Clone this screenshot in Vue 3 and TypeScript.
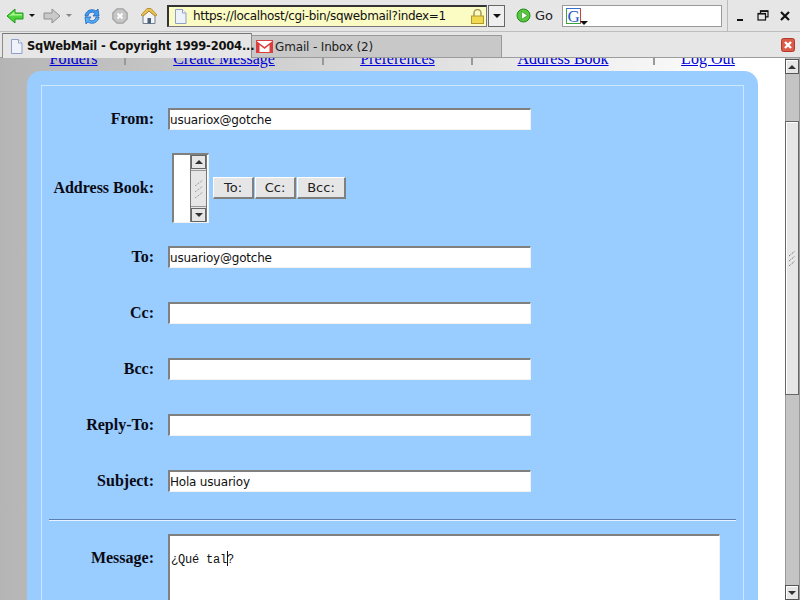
<script setup lang="ts">
const links: string[] = ['Folders', 'Create Message', 'Preferences', 'Address Book', 'Log Out']
const rows = [
  { label: 'To:', value: 'usuarioy@gotche', cls: 'r-to' },
  { label: 'Cc:', value: '', cls: 'r-cc' },
  { label: 'Bcc:', value: '', cls: 'r-bcc' },
  { label: 'Reply-To:', value: '', cls: 'r-reply' },
  { label: 'Subject:', value: 'Hola usuarioy', cls: 'r-subject' },
]
</script>

<template>
  <div class="window">
    <header class="toolbar">
      <svg class="ic back" width="18" height="18" viewBox="0 0 18 18"><path d="M1 9 9 2v4h8v6H9v4z" fill="#4fd33c" stroke="#1f9a18" stroke-width="1" stroke-linejoin="round"/><path d="M3 9 8.500 4.500V7h7.500v1.500H7z" fill="#a9f58f"/></svg>
      <span class="caret dark"></span>
      <svg class="ic fwd" width="18" height="18" viewBox="0 0 18 18"><path d="M17 9 9 2v4H1v6h8v4z" fill="#c9c9c9" stroke="#909090" stroke-width="1" stroke-linejoin="round"/></svg>
      <span class="caret grey"></span>
      <svg class="ic reload" width="18" height="18" viewBox="0 0 18 18"><path d="M2 9a7 7 0 0 1 11-5l2-2 1 7h-6l2-2.500A4 4 0 0 0 5 9z" fill="#3f9bee" stroke="#1c62c4" stroke-width=".8"/><path d="M16 10a7 7 0 0 1-11 5l-2 2-1-7h6l-2 2.500A4 4 0 0 0 13 10z" fill="#55b0f5" stroke="#1c62c4" stroke-width=".8"/></svg>
      <svg class="ic stop" width="16" height="16" viewBox="0 0 16 16"><path d="M5 .8h6L15.200 5v6L11 15.200H5L.8 11V5z" fill="#c6c6c6" stroke="#a2a2a2" stroke-width="1.200"/><path d="M5.500 5.500l5 5m0-5-5 5" stroke="#fff" stroke-width="2"/></svg>
      <svg class="ic home" width="18" height="18" viewBox="0 0 18 18"><path d="M3 9v7.500h12V9L9 4z" fill="#f4f4f4" stroke="#6f7f8f"/><path d="M1 8 7 1.500h4l6 6.500-2 1-6-5-6 5z" fill="#eec14e" stroke="#a98528" stroke-width=".8"/><rect x="7.500" y="11" width="3.500" height="5.500" fill="#47617e"/></svg>
      <div class="url">
        <svg class="page" width="13" height="15" viewBox="0 0 13 15"><path d="M1.500.5h7l3.500 3.500v10.500H1.500z" fill="#eef3fb" stroke="#8f9fc6"/><path d="M8.500.5V4H12" fill="#fff" stroke="#8f9fc6"/></svg>
        <span class="url-text">https://localhost/cgi-bin/sqwebmail?index=1</span>
        <svg class="lock" width="13" height="15" viewBox="0 0 13 15"><path d="M3 7V4a3.500 3.500 0 0 1 7 0v3" fill="none" stroke="#a79a5c" stroke-width="1.500"/><rect x=".5" y="7" width="12" height="7.500" fill="#f0d850" stroke="#b09a30"/></svg>
      </div>
      <div class="url-drop"><span class="caret dark"></span></div>
      <svg class="go-ic" width="15" height="15" viewBox="0 0 15 15"><circle cx="7.500" cy="7.500" r="6.500" fill="#58c83c" stroke="#1f8a18"/><path d="M5.500 3.500v8l6-4z" fill="#fff" stroke="#1f8a18" stroke-width=".6"/></svg>
      <span class="go">Go</span>
      <div class="search">
        <span class="g-logo">G</span><span class="caret dark small"></span>
      </div>
      <div class="winctl">
        <svg width="12" height="12" viewBox="0 0 12 12"><rect x="2" y="9" width="6" height="2" fill="#111"/></svg>
        <svg width="12" height="12" viewBox="0 0 12 12"><path d="M3.500 3V.8h7.500v6H8.500" fill="none" stroke="#111" stroke-width="1.200"/><rect x="1" y="3.500" width="7.500" height="6.500" fill="none" stroke="#111" stroke-width="1.200"/><rect x="3.500" y=".5" width="7.500" height="1.500" fill="#111"/><rect x="1" y="3" width="7.500" height="1.500" fill="#111"/></svg>
        <svg width="12" height="12" viewBox="0 0 12 12"><path d="M2 2l8 8m0-8-8 8" stroke="#111" stroke-width="2.200"/></svg>
      </div>
    </header>

    <nav class="tabs">
      <div class="tab active">
        <svg width="13" height="15" viewBox="0 0 13 15"><path d="M1.500.5h7l3.500 3.500v10.500H1.500z" fill="#eef3fb" stroke="#8f9fc6"/><path d="M8.500.5V4H12" fill="#fff" stroke="#8f9fc6"/></svg>
        <span>SqWebMail - Copyright 1999-2004...</span>
      </div>
      <div class="tab inactive">
        <svg width="17" height="13" viewBox="0 0 17 13"><rect x=".5" y=".5" width="16" height="12" fill="#fff" stroke="#d94040"/><path d="M.5 1v11.500h3V5L8.500 9l5-4v7.500h3V1L8.500 7z" fill="#dd3c3c"/></svg>
        <span>Gmail - Inbox (2)</span>
      </div>
      <div class="close-all">
        <svg width="14" height="14" viewBox="0 0 14 14"><rect x=".5" y=".5" width="13" height="13" rx="2" fill="#dc5a48" stroke="#b23a2c"/><path d="M4 4l6 6m0-6-6 6" stroke="#fff" stroke-width="2.400"/></svg>
      </div>
    </nav>

    <div class="view">
      <main class="page-area">
        <div class="menu">
          <div v-for="l in links" :key="l" class="menu-cell"><a href="#">{{ l }}</a></div>
        </div>
        <section class="panel">
          <div class="inner">
            <div class="row r-from">
              <label>From:</label>
              <input class="field" value="usuariox@gotche" />
            </div>
            <div class="row r-book">
              <label>Address Book:</label>
              <div class="book">
                <div class="listbox">
                  <div class="lb-bar">
                    <span class="sb-btn tiny"><i class="tri up"></i></span>
                    <span class="lb-thumb">
                      <svg width="10" height="20" viewBox="0 0 10 20"><path d="M1 7 9 1M1 13l8-6M1 19l8-6" stroke="#8a8a8a" stroke-dasharray="1 1" fill="none"/></svg>
                    </span>
                    <span class="sb-btn tiny"><i class="tri down"></i></span>
                  </div>
                </div>
                <button class="btn b-to">To:</button>
                <button class="btn b-cc">Cc:</button>
                <button class="btn b-bcc">Bcc:</button>
              </div>
            </div>
            <div v-for="r in rows" :key="r.label" class="row" :class="r.cls">
              <label>{{ r.label }}</label>
              <input class="field" :value="r.value" />
            </div>
            <div class="rule"></div>
            <div class="row r-msg">
              <label>Message:</label>
              <div class="message"><span>¿Qué tal</span><i class="cursor"></i><span>?</span></div>
            </div>
          </div>
        </section>
      </main>
      <aside class="scrollbar">
        <span class="sb-btn"><i class="tri up"></i></span>
        <span class="sb-gap"></span>
        <span class="sb-thumb">
          <svg width="8" height="16" viewBox="0 0 8 16"><path d="M1 6 7 1M1 11l6-5M1 16l6-5" stroke="#666" stroke-dasharray="1 1" fill="none"/></svg>
        </span>
        <span class="sb-track"></span>
        <span class="sb-btn"><i class="tri down"></i></span>
      </aside>
    </div>
  </div>
</template>

<style>
html, body { margin: 0; overflow: hidden; }
</style>

<style scoped>
.window {
  width: 800px;
  height: 600px;
  display: flex;
  flex-direction: column;
  overflow: hidden;
  font-family: "DejaVu Sans", sans-serif;
  font-size: 12px;
  color: #111;
  background: #e6e6e6;
}
.toolbar {
  height: 32px;
  box-sizing: border-box;
  flex: none;
  display: flex;
  align-items: center;
  padding-left: 6px;
  border-bottom: 1px solid #bdbdbd;
  background: #e6e6e6;
}
.toolbar svg { flex: none; }
.caret {
  width: 0;
  height: 0;
  flex: none;
  border-left: 3px solid transparent;
  border-right: 3px solid transparent;
  border-top: 3px solid #111;
}
.caret.grey { border-top-color: #888; }
.ic.back { margin-right: 5px; }
.ic.fwd { margin-left: 8px; margin-right: 5px; }
.ic.reload { margin-left: 11px; }
.ic.stop { margin-left: 11px; }
.ic.home { margin-left: 12px; }
.url {
  margin-left: 9px;
  width: 320px;
  height: 22px;
  box-sizing: border-box;
  display: flex;
  align-items: center;
  border: 1px solid #777;
  border-top: 2px solid #333;
  border-left: 2px solid #333;
  background: #fbfbc4;
  padding-left: 5px;
  padding-right: 2px;
}
.url-text {
  margin-left: 6px;
  flex: 1;
  min-width: 0;
  font-size: 12px;
  letter-spacing: -0.32px;
  white-space: nowrap;
  overflow: hidden;
}
.url-drop {
  width: 17px;
  height: 22px;
  margin-left: 1px;
  box-sizing: border-box;
  border: 1px solid #666;
  background: #efefef;
  display: flex;
  align-items: center;
  justify-content: center;
}
.url-drop .caret { border-left-width: 4px; border-right-width: 4px; border-top-width: 4px; }
.go-ic { margin-left: 11px; }
.go { margin-left: 4px; font-size: 13px; color: #222; }
.search {
  margin-left: 9px;
  width: 160px;
  height: 22px;
  box-sizing: border-box;
  border: 1px solid #999;
  background: #fff;
  padding-left: 3px;
  display: flex;
}
.g-logo {
  width: 15px;
  height: 16px;
  margin-top: 2px;
  box-sizing: border-box;
  border: 1px solid #3aa040;
  border-top-color: #3a6fd0;
  border-right-color: #d04030;
  font: 17px/15px "Liberation Serif", serif;
  color: #2558c8;
  text-align: center;
}
.caret.small { margin-top: 15px; border-left-width: 4px; border-right-width: 4px; border-top-width: 4px; margin-left: -1px; }
.winctl {
  margin-left: 5px;
  height: 32px;
  flex: 1;
  box-sizing: border-box;
  border-left: 1px solid #bbb;
  display: flex;
  align-items: center;
  justify-content: space-between;
  padding: 0 9px 0 7px;
}
.tabs {
  height: 26px;
  flex: none;
  box-sizing: border-box;
  display: flex;
  align-items: flex-end;
  padding-left: 2px;
  border-bottom: 1px solid #9c9c9c;
  background: #e6e6e6;
}
.tab {
  width: 250px;
  flex: none;
  box-sizing: border-box;
  display: flex;
  align-items: center;
  white-space: nowrap;
}
.tab svg { flex: none; }
.tab.active {
  height: 25px;
  margin-bottom: -1px;
  position: relative;
  border: 1px solid #8c8c8c;
  border-bottom: none;
  border-top-color: #777;
  background: #e6e6e6;
  padding-left: 7px;
  gap: 4px;
  font-size: 11.5px;
  letter-spacing: -0.2px;
  font-weight: 700;
}
.tab.inactive {
  height: 22px;
  background: #c8c8c8;
  border: 1px solid #999;
  border-left: none;
  border-bottom: none;
  padding-left: 4px;
  gap: 2px;
  font-size: 12px;
  letter-spacing: -0.15px;
  color: #222;
}
.close-all { margin-left: auto; margin-right: 5px; align-self: center; display: flex; }
.view {
  flex: 1;
  min-height: 0;
  display: flex;
}
.page-area {
  flex: 1;
  min-width: 0;
  background: linear-gradient(90deg, #b5b5b5 0%, #ffffff 95%);
  overflow: hidden;
}
.menu {
  display: grid;
  grid-template-columns: 103px 198px 149px 182px 108px;
  margin: -5px 0 0 21px;
  height: 18px;
  font: 16px/17px "Liberation Serif", serif;
  text-align: center;
}
.menu-cell {
  height: 12px;
  box-sizing: border-box;
  border-left: 2px solid #999;
}
.menu-cell:first-child { border-left: none; padding-left: 2px; }
.menu-cell a { color: #0000d8; position: relative; top: -3px; }
.panel {
  margin: 0 0 0 27px;
  width: 731px;
  height: 560px;
  box-sizing: border-box;
  padding: 14px;
  background: #99ccff;
  border-radius: 14px 14px 0 0;
}
.inner {
  width: 703px;
  height: 600px;
  box-sizing: border-box;
  border: 1px solid #cfe6ff;
  padding-top: 22px;
}
.row {
  display: grid;
  grid-template-columns: 112px 1fr;
  column-gap: 14px;
  align-items: center;
}
.row label {
  text-align: right;
  font: 700 16px/18px "Liberation Serif", serif;
  color: #0a0a14;
  white-space: nowrap;
}
.field {
  width: 363px;
  height: 22px;
  box-sizing: border-box;
  padding: 1px 0 0 0;
  margin: 0;
  border: 2px solid #808080;
  border-right: 1px solid #f2f2f2;
  border-bottom: 1px solid #f2f2f2;
  background: #fff;
  font: 12px "DejaVu Sans", sans-serif;
  letter-spacing: -0.2px;
  color: #111;
  outline: none;
}
.r-book { margin-top: 23px; }
.r-to { margin-top: 23px; }
.r-cc, .r-bcc, .r-reply, .r-subject { margin-top: 34px; }
.book {
  display: flex;
  align-items: center;
  padding-left: 4px;
}
.listbox {
  width: 37px;
  height: 70px;
  box-sizing: border-box;
  border: 2px solid #808080;
  border-right: 1px solid #f2f2f2;
  border-bottom: 1px solid #f2f2f2;
  background: #fff;
  display: flex;
  justify-content: flex-end;
  margin-right: 4px;
}
.lb-bar {
  width: 15px;
  margin-right: 1px;
  display: flex;
  flex-direction: column;
  background: #e6e6e6;
  border-left: 1px solid #777;
  border-right: 1px solid #777;
}
.lb-thumb {
  flex: 1;
  display: flex;
  align-items: center;
  justify-content: center;
  border-top: 1px solid #999;
  border-bottom: 1px solid #999;
  margin: 1px 0;
}
.sb-btn {
  height: 15px;
  flex: none;
  box-sizing: border-box;
  border: 1px solid #555;
  background: #e6e6e6;
  box-shadow: inset 1px 1px 0 #fff;
  display: flex;
  align-items: center;
  justify-content: center;
}
.sb-btn.tiny { height: 14px; border-color: #666; box-shadow: none; }
.tri { width: 0; height: 0; border-left: 4px solid transparent; border-right: 4px solid transparent; display: block; }
.tri.up { border-bottom: 4px solid #333; }
.tri.down { border-top: 4px solid #333; }
.btn {
  height: 22px;
  box-sizing: border-box;
  margin: 0 1px 0 0;
  padding: 0;
  border: 2px solid #808080;
  border-top: 1px solid #fff;
  border-left: 1px solid #fff;
  background: #e6e6e6;
  font: 13px "DejaVu Sans", sans-serif;
  color: #222;
}
.b-to { width: 41px; }
.b-cc { width: 41px; }
.b-bcc { width: 49px; }
.rule {
  margin: 27px 0 13px 7px;
  width: 687px;
  height: 2px;
  box-sizing: border-box;
  border-top: 1px solid #5a7fb0;
  border-bottom: 1px solid #e6f2ff;
}
.r-msg { align-items: start; }
.r-msg label { margin-top: 15px; }
.message {
  width: 552px;
  height: 140px;
  box-sizing: border-box;
  border: 2px solid #808080;
  border-right: 1px solid #f2f2f2;
  background: #fff;
  padding: 15px 0 0 1px;
  font: 12px/17px "Liberation Mono", monospace;
  letter-spacing: -0.2px;
  color: #111;
  white-space: pre;
}
.cursor {
  display: inline-block;
  width: 1px;
  height: 15px;
  margin-right: -1px;
  background: #111;
  vertical-align: -3px;
}
.scrollbar {
  width: 16px;
  flex: none;
  display: flex;
  flex-direction: column;
  box-sizing: border-box;
  padding: 1px 1px 0 1px;
  background: linear-gradient(90deg, #fff 1px, #999 1px, #999 2px, #c4c4c4 2px, #c4c4c4 15px, #999 15px);
}
.scrollbar .sb-btn { height: 15px; }
.sb-gap { height: 47px; flex: none; }
.sb-thumb {
  height: 274px;
  box-sizing: border-box;
  flex: none;
  background: #e6e6e6;
  border: 1px solid #666;
  box-shadow: inset 1px 1px 0 #fff;
  display: flex;
  align-items: center;
  justify-content: center;
}
.sb-track { flex: 1; }
</style>
